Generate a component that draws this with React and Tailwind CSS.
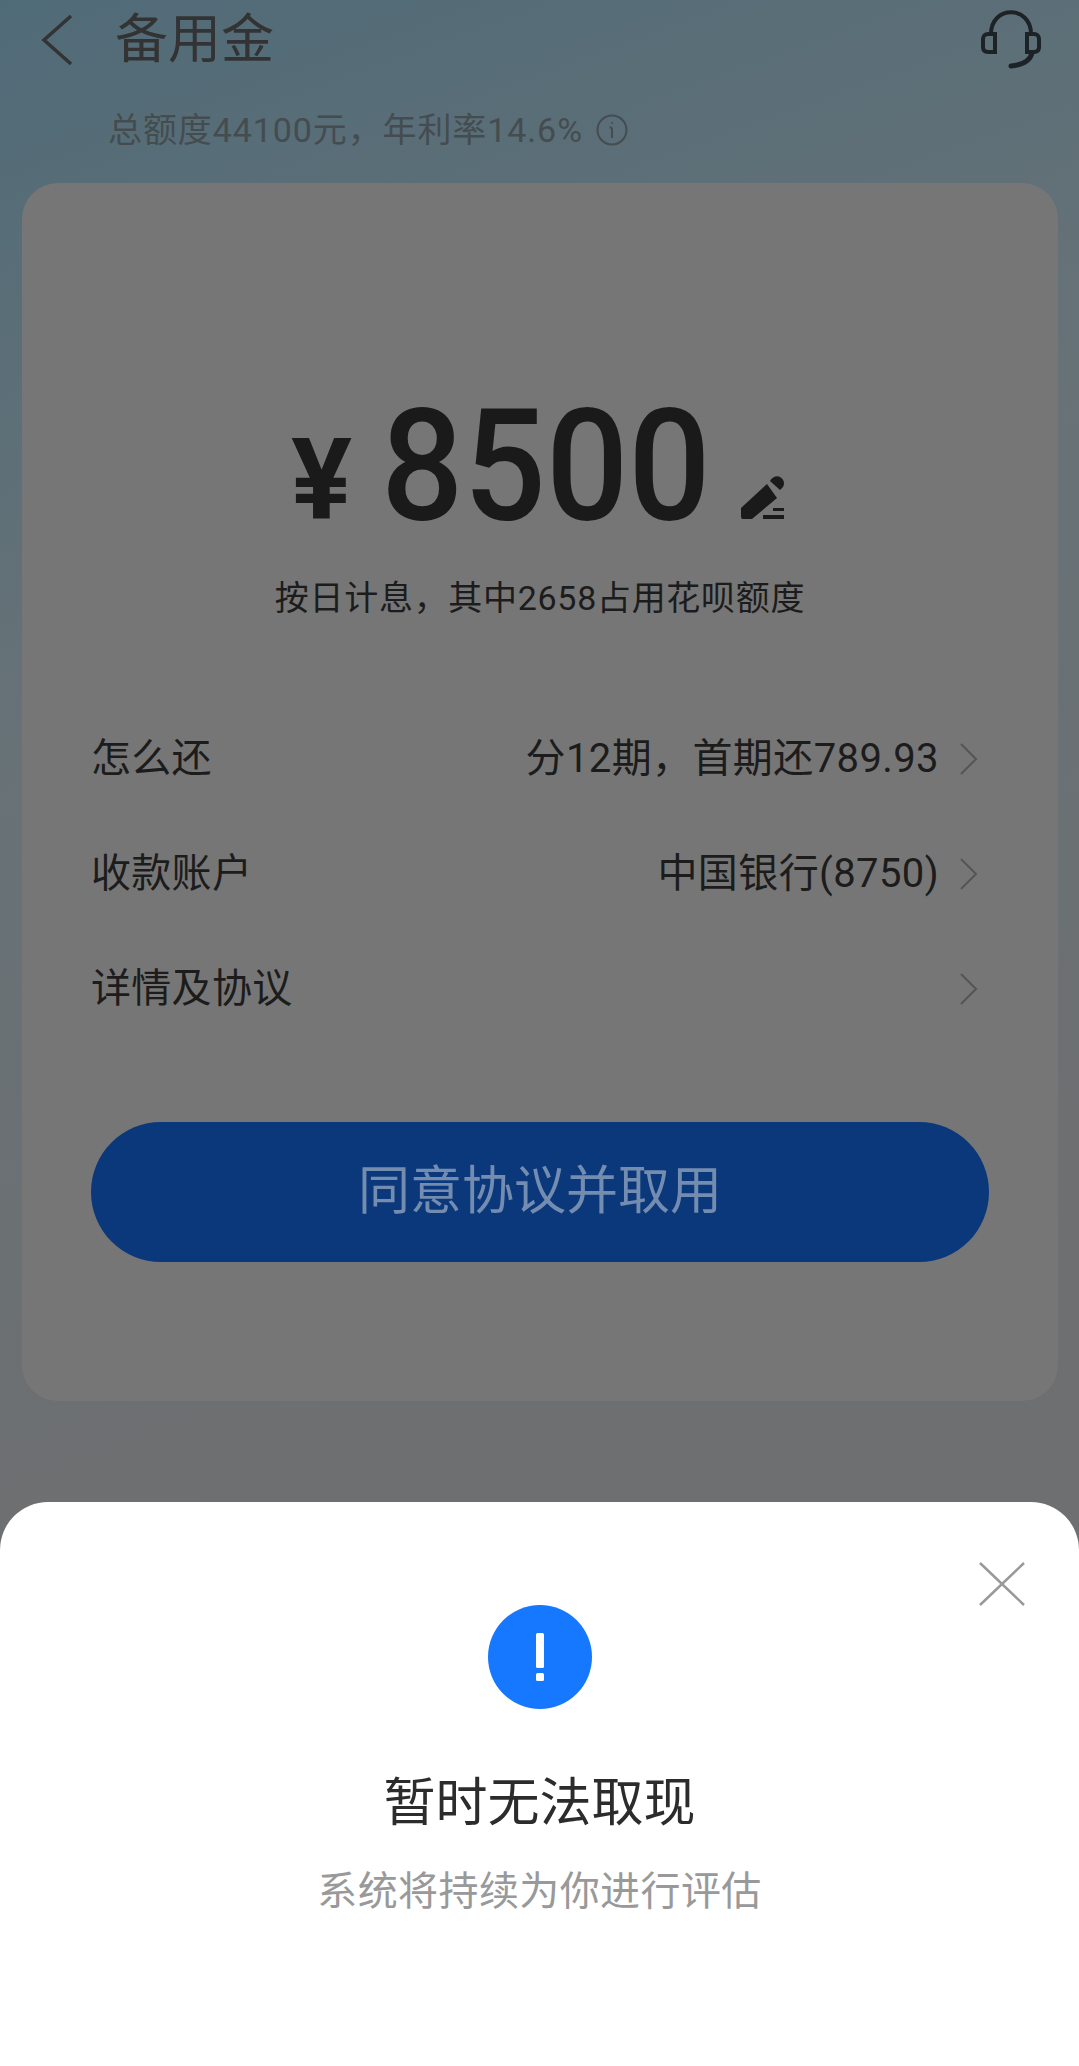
const font = { fontFamily: 'Roboto, "Noto Sans CJK SC", sans-serif' };

function Chevron() {
  return (
    <svg width="20" height="34" viewBox="0 0 20 34" fill="none" className="ml-[20px] shrink-0">
      <path d="M2 2 L17 17 L2 32" stroke="#555" strokeWidth="2" />
    </svg>
  );
}

function Row({ label, value }) {
  return (
    <div className="flex h-[115px] items-center pr-[10px] text-[40px] leading-none text-[#1c1c1c]">
      <span className="flex-1 tracking-[0.3px]">{label}</span>
      {value && <span className="tracking-[0.4px]">{value}</span>}
      <Chevron />
    </div>
  );
}

export default function App() {
  return (
    <div
      style={font}
      className="flex h-[2066px] w-[1079px] flex-col overflow-hidden bg-[linear-gradient(160deg,#506b78_0%,#677277_30%,#6e6f71_65%,#6e6f71_100%)]"
    >
      <header className="flex h-[80px] items-center pl-[40px] pr-[37px]">
        <svg width="34" height="52" viewBox="0 0 34 52" fill="none">
          <path d="M31 2 L4 26 L31 50" stroke="#333" strokeWidth="3.5" />
        </svg>
        <h1 className="ml-[41px] flex-1 text-[53px] font-normal leading-none text-[#333]">备用金</h1>
        <svg width="62" height="60" viewBox="0 0 62 60" fill="none" stroke="#1d2226" strokeWidth="4">
          <path d="M11 24 C11 -5 51 -5 51 24" />
          <path d="M15 24 L15 42 L8 42 C4 42 3 40 3 37 L3 29 C3 26 5 24 8 24 Z" />
          <path d="M47 24 L47 42 L54 42 C58 42 59 40 59 37 L59 29 C59 26 57 24 54 24 Z" />
          <path d="M52 43 C50 51 42 55 31 56" strokeLinecap="round" strokeWidth="5" />
        </svg>
      </header>
      <div className="mt-[29px] flex h-[42px] items-center pl-[108px] text-[34px] leading-none text-[#454c50]">
        <span className="tracking-[0.9px]">总额度44100元，年利率14.6%</span>
        <svg width="32" height="32" viewBox="0 0 32 32" fill="none" stroke="#454c50" strokeWidth="2" className="ml-[13px]">
          <circle cx="16" cy="16" r="14.5" />
          <path d="M16 13.5 V24 M13.5 13.5 H16" />
          <circle cx="16" cy="9" r="1" fill="#454c50" stroke="none" />
        </svg>
      </div>

      <main className="mx-[22px] mt-[32px] flex h-[1218px] w-[1036px] flex-col rounded-[36px] bg-[#767676] px-[69px] pt-[218px]">
        <div className="flex h-[130px] items-baseline pl-[200px] text-[#1a1a1a]">
          <span className="text-[114px] font-bold leading-none">¥</span>
          <span className="ml-[29px] inline-block w-[326px] origin-left scale-x-[0.93] text-[156px] font-medium leading-[130px]">8500</span>
          <svg width="44" height="43" viewBox="0 0 44 43" className="ml-[34px]" fill="#1a1a1a">
            <path d="M0 32 L26 8 L36 22 L11 43 L2 43 C0 43 0 41 0 39 Z" />
            <path d="M29 5 C31 1 36 -1 39 1 C43 3 44 8 42 11 L39 14 Z" />
            <rect x="32" y="32" width="11" height="3" />
            <rect x="22" y="39" width="21" height="4" />
          </svg>
        </div>
        <p className="mt-[50px] text-center text-[34px] leading-none tracking-[0.7px] text-[#1c1c1c]">按日计息，其中2658占用花呗额度</p>
        <div className="mt-[86px]">
          <Row label="怎么还" value="分12期，首期还789.93" />
          <Row label="收款账户" value="中国银行(8750)" />
          <Row label="详情及协议" />
        </div>
        <button className="mt-[76px] h-[140px] w-[898px] rounded-full bg-[#0a387a] text-[52px] text-[#738cb0]">同意协议并取用</button>
      </main>

      <div className="flex-1" />

      <section className="relative flex h-[564px] flex-col items-center rounded-t-[48px] bg-white pt-[103px]">
        <svg width="46" height="44" viewBox="0 0 46 44" fill="none" stroke="#999" strokeWidth="2.5" className="absolute right-[54px] top-[60px]">
          <path d="M1 1 L45 43 M45 1 L1 43" />
        </svg>
        <div className="flex h-[104px] w-[104px] items-center justify-center rounded-full bg-[#1677ff]">
          <svg width="8" height="48" viewBox="0 0 8 48" fill="white">
            <rect width="8" height="35" rx="1.5" />
            <rect y="40" width="8" height="8" rx="1.5" />
          </svg>
        </div>
        <h2 className="mt-[69px] text-[52px] font-normal leading-none text-[#2c2c2c]">暂时无法取现</h2>
        <p className="mt-[42px] text-[40px] leading-none tracking-[0.4px] text-[#999]">系统将持续为你进行评估</p>
      </section>
    </div>
  );
}
